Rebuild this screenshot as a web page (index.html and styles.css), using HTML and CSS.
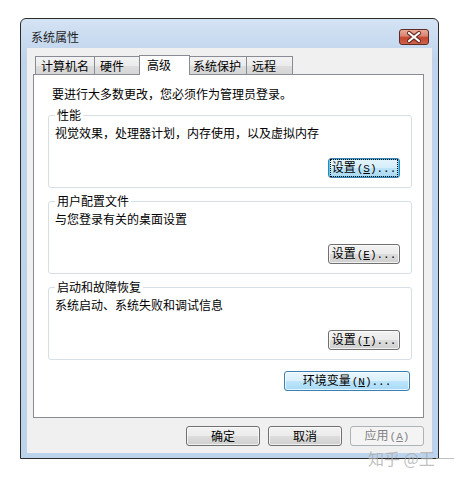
FILE: index.html
```html
<!DOCTYPE html>
<html lang="zh-CN">
<head>
    <meta charset="UTF-8">
    <title>系统属性</title>
    <link rel="stylesheet" href="styles.css">
</head>
<body>
    <!-- Ventana de propiedades del sistema -->
    <div class="window">
        <div class="titlebar">
            <span class="title">系统属性</span>
            <span class="close">
                <svg width="28" height="14" viewBox="0 0 28 14">
                    <path d="M9 3 L19 11 M19 3 L9 11" stroke="#6a2a22" stroke-width="4.2" stroke-linecap="round"/>
                    <path d="M9 3 L19 11 M19 3 L9 11" stroke="#fff" stroke-width="2.2" stroke-linecap="round"/>
                </svg>
            </span>
        </div>
        <div class="client">
            <div class="tabs">
                <div class="tab">计算机名</div>
                <div class="tab">硬件</div>
                <div class="tab active">高级</div>
                <div class="tab">系统保护</div>
                <div class="tab">远程</div>
            </div>
            <div class="panel">
                <p class="intro">要进行大多数更改，您必须作为管理员登录。</p>
                <fieldset class="group">
                    <legend>性能</legend>
                    <p class="desc">视觉效果，处理器计划，内存使用，以及虚拟内存</p>
                    <button class="btn btn-set btn-focus"><span class="focus">设置<span class="k">(<u>S</u>)...</span></span></button>
                </fieldset>
                <fieldset class="group">
                    <legend>用户配置文件</legend>
                    <p class="desc">与您登录有关的桌面设置</p>
                    <button class="btn btn-set">设置<span class="k">(<u>E</u>)...</span></button>
                </fieldset>
                <fieldset class="group">
                    <legend>启动和故障恢复</legend>
                    <p class="desc">系统启动、系统失败和调试信息</p>
                    <button class="btn btn-set">设置<span class="k">(<u>T</u>)...</span></button>
                </fieldset>
                <button class="btn btn-hot btn-env">环境变量<span class="k">(<u>N</u>)...</span></button>
            </div>
            <div class="actions">
                <button class="btn btn-dlg">确定</button>
                <button class="btn btn-dlg">取消</button>
                <button class="btn btn-dlg" disabled>应用<span class="k">(<u>A</u>)</span></button>
            </div>
        </div>
    </div>
    <div class="watermark">知乎 @王<span class="dash"></span></div>
</body>
</html>
```

FILE: styles.css
```css
/* Estilos generales */
body {
    margin: 0;
    background-color: #fff;
    font-family: "Noto Sans CJK SC", "Liberation Sans", sans-serif;
    font-size: 12px;
    line-height: 14px;
    color: #000;
}
/* Marco de la ventana */
.window {
    width: 405px;
    margin: 18px 0 0 20px;
    padding: 0 6px 5px 6px;
    border: 1px solid #2c2c2c;
    border-radius: 6px 6px 0 0;
    background: linear-gradient(#d4e3f4, #bfd4ec 40px, #bcd3ec);
}
.titlebar {
    height: 29px;
    display: flex;
    align-items: center;
    justify-content: space-between;
    padding: 6px 3px 0 4px;
    box-sizing: border-box;
}
.title {
    color: #1e1e1e;
}
.close {
    width: 28px;
    height: 14px;
    border: 1px solid #5e2a25;
    border-radius: 3px;
    background: linear-gradient(#e9a998, #d98572 42%, #c5452e 55%, #cd634c);
    display: flex;
}
/* Area de cliente */
.client {
    background-color: #f0f0f0;
    padding: 6px 8px 7px 6px;
}
.tabs {
    display: flex;
    align-items: flex-end;
    height: 20px;
    padding-left: 2px;
}
.tab {
    height: 16px;
    line-height: 16px;
    min-width: 35px;
    padding: 1px 5px 0;
    margin-left: -1px;
    border: 1px solid #898c95;
    border-bottom: none;
    background: linear-gradient(#f3f3f3, #ebebeb 50%, #dddddd 51%, #d6d6d6);
}
.tab:first-child {
    margin-left: 0;
}
.tab.active {
    height: 19px;
    line-height: 17px;
    padding: 0 7px 0 7px;
    margin: 0 -2px -1px -2px;
    background: #fff;
    position: relative;
    z-index: 1;
}
.panel {
    background-color: #fff;
    border: 1px solid #898c95;
    padding: 12px 11px 26px 14px;
}
.intro {
    margin: 0 0 7px 4px;
}
/* Cuadros de grupo */
.group {
    margin: 0 0 6px 0;
    padding: 4px 11px 9px 6px;
    border: 1px solid #d5dfe5;
    border-radius: 3px;
}
.group legend {
    padding: 0 2px;
    margin-left: 0;
}
.desc {
    margin: 0 0 18px 0;
}
/* Botones */
.btn {
    font-family: inherit;
    font-size: 12px;
    line-height: 14px;
    color: #000;
    height: 20px;
    padding: 0;
    border: 1px solid #707070;
    border-radius: 3px;
    background: linear-gradient(#f2f2f2, #ebebeb 50%, #dddddd 51%, #cfcfcf);
    box-shadow: inset 0 0 0 1px rgba(255, 255, 255, 0.7);
}
.btn .k {
    font-family: "Liberation Mono", monospace;
    font-size: 11px;
    margin-left: 1px;
}
.btn-set {
    display: block;
    width: 72px;
    margin-left: auto;
}
.btn-focus {
    border-color: #3c7fb1;
    background: linear-gradient(#e5f4fc, #d3eefb 50%, #bde4f8 51%, #a9d9f2);
    box-shadow: inset 0 0 0 1px #48d3fa;
}
.btn-focus .focus {
    display: block;
    margin: 0 2px;
    outline: 1px dotted #000;
    outline-offset: 0;
    line-height: 14px;
}
.btn-hot {
    border-color: #3c7fb1;
    background: linear-gradient(#eaf6fd, #d9f0fc 50%, #bee6fd 51%, #a7d9f5);
}
.btn-env {
    display: block;
    width: 126px;
    margin: 11px 2px 0 auto;
}
.actions {
    display: flex;
    justify-content: flex-end;
    gap: 8px;
    margin-top: 8px;
}
.btn-dlg {
    width: 74px;
}
.btn-dlg:disabled {
    color: #838383;
    border-color: #adb2b5;
    background: #f4f4f4;
    box-shadow: none;
}
/* Marca de agua */
.watermark {
    position: absolute;
    left: 368px;
    top: 449px;
    font-size: 16px;
    line-height: 18px;
    color: rgba(170, 170, 170, 0.75);
    display: flex;
    align-items: center;
}
.dash {
    display: inline-block;
    width: 18px;
    height: 1px;
    background: rgba(170, 170, 170, 0.75);
    margin-left: 1px;
}
```
